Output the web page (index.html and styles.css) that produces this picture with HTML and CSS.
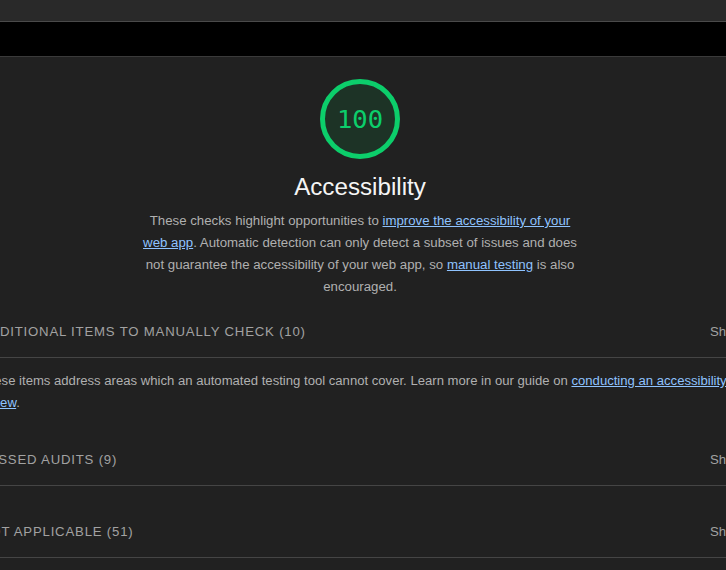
FILE: index.html
```html
<!DOCTYPE html>
<html lang="en">
<head>
<meta charset="utf-8">
<title>Accessibility</title>
<link rel="stylesheet" href="styles.css">
</head>
<body>
<div class="topbar"></div>
<div class="blackbar"></div>
<main class="report">
  <section class="cat-header">
    <div class="gauge">
      <svg class="gauge-ring" width="80" height="80" viewBox="0 0 80 80">
        <circle cx="40" cy="40" r="37.5" fill="#1d3326" stroke="#0cce6b" stroke-width="5"/>
      </svg>
      <span class="gauge-num">100</span>
    </div>
    <h1 class="cat-title">Accessibility</h1>
    <p class="cat-desc">These checks highlight opportunities to <a href="#">improve the accessibility of your web app</a>. Automatic detection can only detect a subset of issues and does not guarantee the accessibility of your web app, so <a href="#">manual testing</a> is also encouraged.</p>
  </section>

  <section class="clump clump-first">
    <div class="clump-summary">
      <span class="clump-title">Additional items to manually check (10)</span>
      <span class="clump-show">Show</span>
    </div>
    <p class="clump-desc">These items address areas which an automated testing tool cannot cover. Learn more in our guide on <a href="#">conducting an accessibility review</a>.</p>
  </section>

  <section class="clump">
    <div class="clump-summary">
      <span class="clump-title">Passed audits (9)</span>
      <span class="clump-show">Show</span>
    </div>
  </section>

  <section class="clump">
    <div class="clump-summary">
      <span class="clump-title">Not applicable (51)</span>
      <span class="clump-show">Show</span>
    </div>
  </section>
</main>
</body>
</html>
```

FILE: styles.css
```css
* { box-sizing: border-box; }
html, body {
  margin: 0;
  padding: 0;
  background: #212121;
  overflow: hidden;
  font-family: "Liberation Sans", Arial, sans-serif;
}
.topbar {
  height: 22px;
  background: #292929;
  border-bottom: 1px solid #4a4a4a;
}
.blackbar {
  height: 35px;
  background: #000;
  border-bottom: 1px solid #3a3a3a;
}
.report {
  width: 760px;
  margin-left: -20px;
}
.cat-header {
  display: flex;
  flex-direction: column;
  align-items: center;
  padding-top: 22px;
}
.gauge {
  position: relative;
  width: 80px;
  height: 80px;
  display: flex;
  align-items: center;
  justify-content: center;
}
.gauge-ring {
  position: absolute;
  left: 0;
  top: 0;
}
.gauge-num {
  position: relative;
  font-family: "DejaVu Sans Mono", monospace;
  font-size: 25.5px;
  color: #0cce6b;
}
.cat-title {
  margin: 13px 0 0;
  font-size: 24.2px;
  line-height: 30px;
  font-weight: normal;
  color: #f5f5f5;
}
.cat-desc {
  margin: 8px 0 0;
  width: 446px;
  text-align: center;
  font-size: 13.25px;
  line-height: 22px;
  color: #b0b0b0;
}
a {
  color: #8fc3ff;
  text-decoration: underline;
}
.clump { margin-top: 20px; }
.clump-first { margin-top: 8px; }
.clump-summary {
  height: 52px;
  border-bottom: 1px solid #454545;
  display: flex;
  align-items: center;
  justify-content: space-between;
  padding-bottom: 1px;
}
.clump-title {
  text-transform: uppercase;
  letter-spacing: 0.8px;
  font-size: 13.2px;
  color: #a2a2a2;
}
.clump-show {
  font-size: 13.2px;
  color: #a2a2a2;
  margin-right: -3px;
}
.clump-desc {
  margin: 0 0 0 -1px;
  padding-top: 12px;
  font-size: 13.12px;
  line-height: 22px;
  color: #b0b0b0;
}
```
